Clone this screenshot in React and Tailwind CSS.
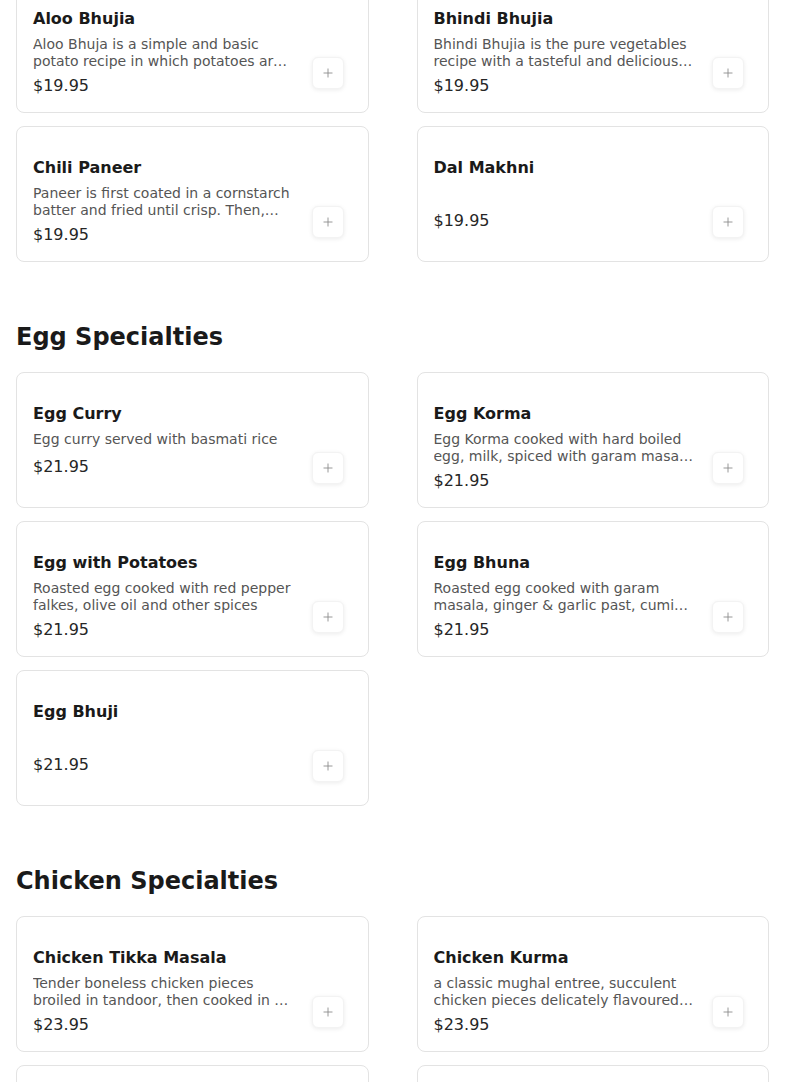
import React from 'react';
import { Plus } from 'lucide-react';

const sections = [
  {
    title: null,
    items: [
      { name: 'Aloo Bhujia', desc: 'Aloo Bhuja is a simple and basic potato recipe in which potatoes are sauteed with spices and herbs', price: '$19.95' },
      { name: 'Bhindi Bhujia', desc: 'Bhindi Bhujia is the pure vegetables recipe with a tasteful and delicious flavour of okra and onions', price: '$19.95' },
      { name: 'Chili Paneer', desc: 'Paneer is first coated in a cornstarch batter and fried until crisp. Then, tossed in a spicy sauce', price: '$19.95' },
      { name: 'Dal Makhni', desc: '', price: '$19.95' },
    ],
  },
  {
    title: 'Egg Specialties',
    items: [
      { name: 'Egg Curry', desc: 'Egg curry served with basmati rice', price: '$21.95' },
      { name: 'Egg Korma', desc: 'Egg Korma cooked with hard boiled egg, milk, spiced with garam masala and cream', price: '$21.95' },
      { name: 'Egg with Potatoes', desc: 'Roasted egg cooked with red pepper falkes, olive oil and other spices', price: '$21.95' },
      { name: 'Egg Bhuna', desc: 'Roasted egg cooked with garam masala, ginger & garlic past, cumin and onions', price: '$21.95' },
      { name: 'Egg Bhuji', desc: '', price: '$21.95' },
    ],
  },
  {
    title: 'Chicken Specialties',
    items: [
      { name: 'Chicken Tikka Masala', desc: 'Tender boneless chicken pieces broiled in tandoor, then cooked in a creamy tomato sauce', price: '$23.95' },
      { name: 'Chicken Kurma', desc: 'a classic mughal entree, succulent chicken pieces delicately flavoured with cashews and cream', price: '$23.95' },
      { name: 'Chicken Curry', desc: 'Boneless chicken cooked in a traditional onion and tomato gravy', price: '$23.95' },
      { name: 'Chicken Vindaloo', desc: 'Chicken and potatoes cooked in a hot and tangy sauce', price: '$23.95' },
    ],
  },
];

const MenuCard = ({ item }) => (
  <div className="h-[136px] flex gap-4 bg-white border border-[#e3e3e3] rounded-lg pl-4 pr-6 pt-[29px] pb-[23px]">
    <div className="flex-1 min-w-0">
      <h3 className="text-base leading-6 font-bold text-[#1a1a1a]">{item.name}</h3>
      <p className="mt-[5px] text-sm leading-[17px] text-[#555] line-clamp-2 min-h-[20px]">
        {item.desc}
      </p>
      <p className="mt-1 text-base leading-6 text-[#262626]">{item.price}</p>
    </div>
    <button className="self-end shrink-0 w-8 h-8 flex items-center justify-center rounded-md bg-white border border-[#f3f3f3] shadow-[0_1px_4px_rgba(0,0,0,0.08)]">
      <Plus size={14} strokeWidth={1.5} className="text-[#8a8a8a]" />
    </button>
  </div>
);

export default function App() {
  return (
    <div className="min-h-screen bg-white font-['DejaVu_Sans',sans-serif] overflow-hidden">
      <div className="px-4 -mt-[23px] flex flex-col gap-[59px] pb-12">
        {sections.map((section, i) => (
          <section key={i}>
            {section.title && (
              <h2 className="text-2xl leading-8 font-bold text-[#1a1a1a] mb-[19px]">{section.title}</h2>
            )}
            <div className="grid grid-cols-2 gap-x-12 gap-y-[13px]">
              {section.items.map((item) => (
                <MenuCard key={item.name} item={item} />
              ))}
            </div>
          </section>
        ))}
      </div>
    </div>
  );
}
